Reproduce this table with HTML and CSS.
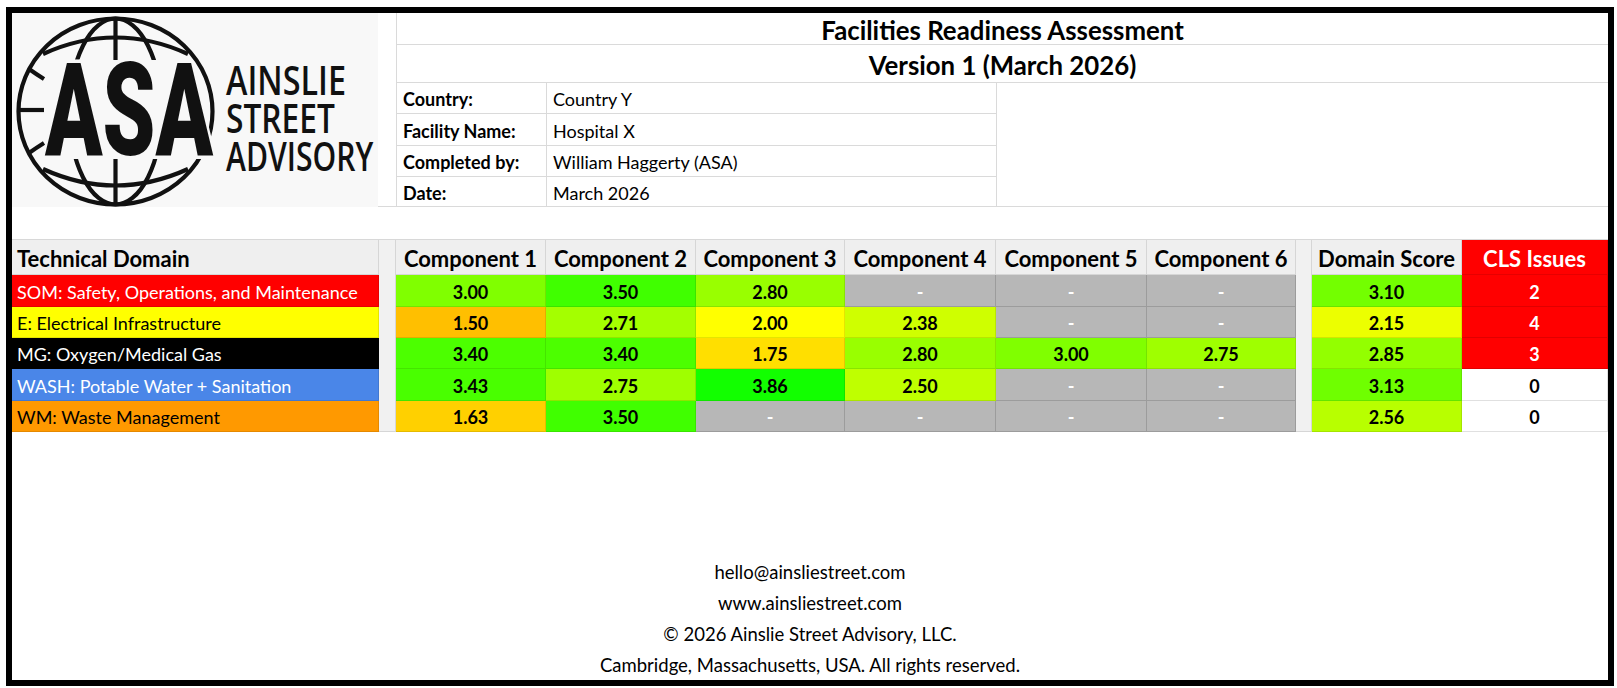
FILE: index.html
```html
<!DOCTYPE html>
<html lang="en">
<head>
<meta charset="utf-8">
<title>Facilities Readiness Assessment</title>
<link rel="stylesheet" href="styles.css">
</head>
<body>
<div class="sheet">
  <header class="top">
    <div class="logo">
      <svg class="logo-svg" width="366" height="194" viewBox="0 0 366 194">
        <defs>
          <clipPath id="capclip">
            <rect x="0" y="0" width="220" height="47"/>
            <rect x="0" y="146" width="220" height="48"/>
          </clipPath>
        </defs>
        <g fill="none" stroke="#111" stroke-width="4.2">
          <ellipse cx="103.5" cy="98.5" rx="97" ry="93"/>
          <g clip-path="url(#capclip)">
            <ellipse cx="103.5" cy="98.5" rx="46" ry="93"/>
            <line x1="103.5" y1="6" x2="103.5" y2="191"/>
          </g>
          <path d="M31 41 Q103.5 8 176 41"/>
          <path d="M31 156 Q103.5 189 176 156"/>
          <path d="M17 56 Q24 61 32 66"/>
          <path d="M7 97 L32 97"/>
          <path d="M17 140 Q24 135 32 130"/>
        </g>
        <g transform="translate(33 142) scale(0.66 1)">
          <text class="asa" x="0" y="0" textLength="254.5" lengthAdjust="spacingAndGlyphs">ASA</text>
        </g>
        <g transform="translate(214 0) scale(0.8 1)">
          <text class="brand" x="0" y="82" textLength="150" lengthAdjust="spacingAndGlyphs">AINSLIE</text>
          <text class="brand" x="0" y="120" textLength="136" lengthAdjust="spacingAndGlyphs">STREET</text>
          <text class="brand" x="0" y="158" textLength="184" lengthAdjust="spacingAndGlyphs">ADVISORY</text>
        </g>
      </svg>
    </div>
    <div class="pad"></div>
    <div class="title t1">Facilities Readiness Assessment</div>
    <div class="title t2">Version 1 (March 2026)</div>
    <div class="lbl">Country:</div>
    <div class="val">Country Y</div>
    <div class="blank"></div>
    <div class="lbl">Facility Name:</div>
    <div class="val">Hospital X</div>
    <div class="lbl">Completed by:</div>
    <div class="val">William Haggerty (ASA)</div>
    <div class="lbl">Date:</div>
    <div class="val">March 2026</div>
  </header>

  <div class="gap"></div>

  <section class="grid">
    <div class="hd hd-left">Technical Domain</div>
    <div class="sp sp1"></div>
    <div class="hd">Component 1</div>
    <div class="hd">Component 2</div>
    <div class="hd">Component 3</div>
    <div class="hd">Component 4</div>
    <div class="hd">Component 5</div>
    <div class="hd">Component 6</div>
    <div class="sp sp2"></div>
    <div class="hd">Domain Score</div>
    <div class="hd hd-cls">CLS Issues</div>

    <div class="dom dom-som">SOM: Safety, Operations, and Maintenance</div>
    <div class="sc" style="background:#80ff00">3.00</div>
    <div class="sc" style="background:#40ff00">3.50</div>
    <div class="sc" style="background:#99ff00">2.80</div>
    <div class="na">-</div>
    <div class="na">-</div>
    <div class="na">-</div>
    <div class="sc" style="background:#73ff00">3.10</div>
    <div class="cls cls-hit">2</div>

    <div class="dom dom-e">E: Electrical Infrastructure</div>
    <div class="sc" style="background:#ffbf00">1.50</div>
    <div class="sc" style="background:#a4ff00">2.71</div>
    <div class="sc" style="background:#ffff00">2.00</div>
    <div class="sc" style="background:#cfff00">2.38</div>
    <div class="na">-</div>
    <div class="na">-</div>
    <div class="sc" style="background:#ecff00">2.15</div>
    <div class="cls cls-hit">4</div>

    <div class="dom dom-mg">MG: Oxygen/Medical Gas</div>
    <div class="sc" style="background:#4cff00">3.40</div>
    <div class="sc" style="background:#4cff00">3.40</div>
    <div class="sc" style="background:#ffdf00">1.75</div>
    <div class="sc" style="background:#99ff00">2.80</div>
    <div class="sc" style="background:#80ff00">3.00</div>
    <div class="sc" style="background:#9fff00">2.75</div>
    <div class="sc" style="background:#93ff00">2.85</div>
    <div class="cls cls-hit">3</div>

    <div class="dom dom-wash">WASH: Potable Water + Sanitation</div>
    <div class="sc" style="background:#49ff00">3.43</div>
    <div class="sc" style="background:#9fff00">2.75</div>
    <div class="sc" style="background:#12ff00">3.86</div>
    <div class="sc" style="background:#bfff00">2.50</div>
    <div class="na">-</div>
    <div class="na">-</div>
    <div class="sc" style="background:#6fff00">3.13</div>
    <div class="cls">0</div>

    <div class="dom dom-wm">WM: Waste Management</div>
    <div class="sc" style="background:#ffd000">1.63</div>
    <div class="sc" style="background:#40ff00">3.50</div>
    <div class="na">-</div>
    <div class="na">-</div>
    <div class="na">-</div>
    <div class="na">-</div>
    <div class="sc" style="background:#b8ff00">2.56</div>
    <div class="cls">0</div>
  </section>

  <footer class="foot">
    <div class="fl">hello@ainsliestreet.com</div>
    <div class="fl">www.ainsliestreet.com</div>
    <div class="fl">© 2026 Ainslie Street Advisory, LLC.</div>
    <div class="fl">Cambridge, Massachusetts, USA. All rights reserved.</div>
  </footer>
</div>
</body>
</html>
```

FILE: styles.css
```css
* { box-sizing: border-box; }
html, body { margin: 0; padding: 0; background: #fff; }
body {
  font-family: Lato, "Open Sans", sans-serif;
  color: #000;
  width: 1617px;
  height: 688px;
  overflow: hidden;
}

.sheet {
  margin: 7px 0 0 6px;
  width: 1608px;
  height: 679px;
  border: 6px solid #000;
  display: flex;
  flex-direction: column;
  background: #fff;
}

/* ---------- top header block ---------- */
.top {
  display: grid;
  grid-template-columns: 366px 18px 150px 450px 1fr;
  grid-template-rows: 32px 38px 31px 32px 31px 30px;
}
.logo {
  grid-column: 1;
  grid-row: 1 / 7;
  background: #f8f8f8;
  overflow: hidden;
}
.logo-svg { display: block; }
.asa {
  font-family: Roboto, "DejaVu Sans", sans-serif;
  font-weight: 900;
  font-size: 129px;
  fill: #111;
  stroke: #f8f8f8;
  stroke-width: 7px;
  paint-order: stroke;
}
.brand {
  font-family: "Open Sans", sans-serif;
  font-weight: 600;
  font-size: 40px;
  fill: #111;
}
.pad {
  grid-column: 2;
  grid-row: 1 / 7;
  border-bottom: 1px solid #dadada;
}
.title {
  grid-column: 3 / 6;
  border-left: 1px solid #dadada;
  border-bottom: 1px solid #dadada;
  display: flex;
  align-items: center;
  justify-content: center;
  font-weight: 700;
  font-size: 25.8px;
  padding-top: 2px;
}
.lbl, .val {
  border-left: 1px solid #dadada;
  border-bottom: 1px solid #dadada;
  display: flex;
  align-items: center;
  padding: 2px 0 0 6px;
  font-size: 18px;
  white-space: nowrap;
}
.lbl { grid-column: 3; font-weight: 700; }
.val { grid-column: 4; }
.blank {
  grid-column: 5;
  grid-row: 3 / 7;
  border-left: 1px solid #dadada;
  border-bottom: 1px solid #dadada;
}

.gap { height: 32px; flex: none; }

/* ---------- main table ---------- */
.grid {
  display: grid;
  grid-template-columns: 367px 17px 150px 150px 149px 151px 151px 149px 16px 150px 146px;
  grid-template-rows: 35px 32px 31px 31px 32px 31px;
  border-top: 1px solid #d8d8d8;
  flex: none;
}
.grid > div {
  display: flex;
  align-items: center;
  justify-content: center;
  white-space: nowrap;
  border-right: 1px solid rgba(0, 0, 0, 0.1);
  border-bottom: 1px solid rgba(0, 0, 0, 0.1);
  padding-top: 2px;
}
.grid > .hd {
  background: #efefef;
  font-weight: 700;
  font-size: 22px;
  border-color: #d6d6d6;
}
.grid > .hd-left { justify-content: flex-start; padding-left: 5px; }
.grid > .hd-cls { background: #ff0000; color: #fff; border-color: #e60000; }
.grid > .sp {
  background: #f1f1f1;
  border-color: #d6d6d6;
}
.sp1 { grid-column: 2; grid-row: 1 / 7; }
.sp2 { grid-column: 9; grid-row: 1 / 7; }

.grid > .dom {
  justify-content: flex-start;
  padding-left: 5px;
  font-size: 18px;
}
.dom-som { background: #ff0000; color: #fff; }
.dom-e { background: #ffff00; color: #000; }
.dom-mg { background: #000; color: #fff; }
.dom-wash { background: #4a86e8; color: #fff; }
.dom-wm { background: #ff9900; color: #000; }

.sc {
  font-weight: 700;
  font-size: 18px;
}
.grid > .na {
  background: #b7b7b7;
  color: #fff;
  font-weight: 700;
  font-size: 18px;
  border-color: #9c9c9c;
}
.grid > .cls {
  font-weight: 700;
  font-size: 18px;
  background: #fff;
  border-color: #e0e0e0;
}
.grid > .cls-hit { background: #ff0000; color: #fff; border-color: #e00000; }

/* ---------- footer ---------- */
.foot {
  margin-top: auto;
  display: flex;
  flex-direction: column;
  align-items: center;
}
.fl {
  height: 31px;
  display: flex;
  align-items: center;
  font-size: 18.5px;
  padding-top: 1px;
}
```
